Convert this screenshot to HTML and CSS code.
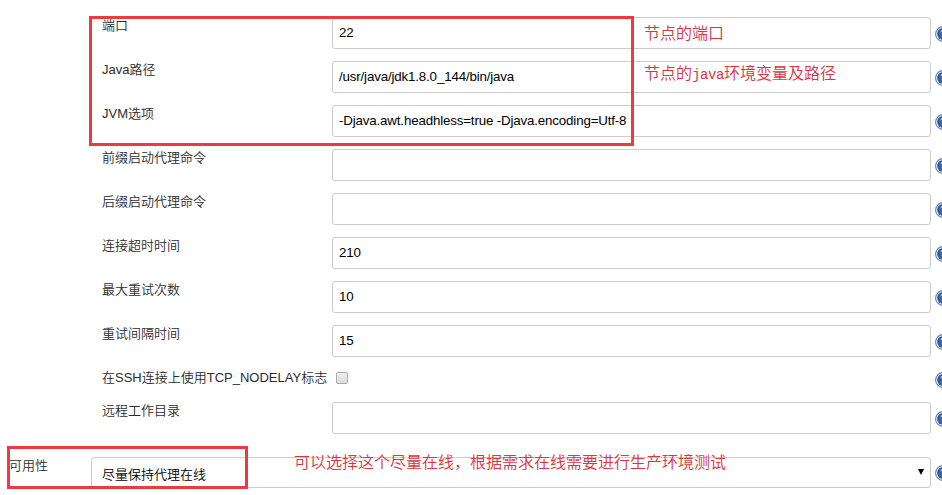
FILE: index.html
```html
<!DOCTYPE html>
<html lang="zh-CN">
<head>
<meta charset="utf-8">
<title>节点配置</title>
<link rel="stylesheet" href="styles.css">
</head>
<body>
<svg class="defs" width="0" height="0">
  <defs>
    <radialGradient id="ball" cx="50%" cy="60%" r="60%">
      <stop offset="0" stop-color="#4673ae"/>
      <stop offset="1" stop-color="#24508f"/>
    </radialGradient>
    <symbol id="help" viewBox="0 0 16 16">
      <circle cx="8" cy="8" r="7.4" fill="#fff" stroke="#5c7cab" stroke-width="1.1"/>
      <circle cx="8" cy="8" r="5.9" fill="url(#ball)"/>
      <path d="M6 6.2C6 3.6 10.8 3.6 10.8 6.2C10.8 8 8 7.8 8 9.7M8 11v1.5" fill="none" stroke="#a9bddb" stroke-width="1.4"/>
    </symbol>
  </defs>
</svg>
<form class="config">
  <div class="row"><label class="label">端口</label><div class="field">22</div><svg class="help"><use href="#help"/></svg></div>
  <div class="row"><label class="label">Java路径</label><div class="field">/usr/java/jdk1.8.0_144/bin/java</div><svg class="help"><use href="#help"/></svg></div>
  <div class="row"><label class="label">JVM选项</label><div class="field">-Djava.awt.headhless=true -Djava.encoding=Utf-8</div><svg class="help"><use href="#help"/></svg></div>
  <div class="row"><label class="label">前缀启动代理命令</label><div class="field"></div><svg class="help"><use href="#help"/></svg></div>
  <div class="row"><label class="label">后缀启动代理命令</label><div class="field"></div><svg class="help"><use href="#help"/></svg></div>
  <div class="row"><label class="label">连接超时时间</label><div class="field">210</div><svg class="help"><use href="#help"/></svg></div>
  <div class="row"><label class="label">最大重试次数</label><div class="field">10</div><svg class="help"><use href="#help"/></svg></div>
  <div class="row"><label class="label">重试间隔时间</label><div class="field">15</div><svg class="help"><use href="#help"/></svg></div>
  <div class="row row-check"><label class="label">在SSH连接上使用TCP_NODELAY标志</label><span class="check-cell"><span class="check"></span></span><svg class="help"><use href="#help"/></svg></div>
  <div class="row row-dir"><label class="label">远程工作目录</label><div class="field"></div><svg class="help"><use href="#help"/></svg></div>
  <div class="row row-avail"><label class="label">可用性</label><div class="field select"><span>尽量保持代理在线</span><svg class="arrow" viewBox="0 0 6 6"><path d="M0 0h6L3 6z"/></svg></div><svg class="help"><use href="#help"/></svg></div>
</form>
<div class="frame frame-top"></div>
<div class="frame frame-bottom"></div>
<p class="note note-port">节点的端口</p>
<p class="note note-java">节点的<span class="latin">java</span>环境变量及路径</p>
<p class="note note-avail">可以选择这个尽量在线，根据需求在线需要进行生产环境测试</p>
</body>
</html>
```
FILE: styles.css
```css
* { box-sizing: border-box; }
body {
  position: relative;
  width: 942px;
  height: 495px;
  margin: 0;
  overflow: hidden;
  background: #fff;
  color: #333;
  font: 350 13px/17px "Liberation Sans", "Noto Sans CJK SC", sans-serif;
}
.defs { position: absolute; }
.config { padding-top: 17px; }
.row {
  display: grid;
  grid-template-columns: 230px 599px 20px;
  align-items: start;
  height: 44px;
  padding-left: 102px;
}
.label { height: 17px; color: #2c2c2c; white-space: nowrap; }
.field {
  display: flex;
  align-items: center;
  height: 32px;
  padding: 0 6px 2px;
  border: 1px solid #ccc;
  border-radius: 3px;
  background: #fff;
  color: #000;
  font-size: 13.33px;
  letter-spacing: -0.16px;
  white-space: nowrap;
}
.help { display: block; width: 16px; height: 16px; margin: 9px 0 0 4px; }
.row-check { height: 33px; }
.check-cell { padding: 3px 0 0 4px; }
.check {
  display: block;
  width: 12px;
  height: 12px;
  border: 1px solid #aaa;
  border-radius: 2px;
  background: linear-gradient(#eee, #ddd);
}
.row-check .help { margin-top: 3px; }
.row-dir { height: 55px; }
.row-avail { grid-template-columns: 82px 840px 20px; padding-left: 9px; }
.select {
  justify-content: space-between;
  height: 31px;
  padding: 3px 6px 0 10px;
  font-size: 13px;
  letter-spacing: 0;
}
.row-avail .help { margin-top: 8px; }
.arrow { width: 6px; height: 6px; margin-bottom: 4px; }
.frame { position: absolute; border: 3px solid #eb3b40; }
.frame-top { left: 89px; top: 16px; width: 545px; height: 130px; }
.frame-bottom { left: 7px; top: 446px; width: 241px; height: 43px; }
.note {
  position: absolute;
  margin: 0;
  color: #d9353f;
  font: 350 16px/20px "Noto Sans CJK SC", sans-serif;
  white-space: nowrap;
}
.latin {
  display: inline-block;
  width: 32px;
  font: 400 14px/16px "Liberation Mono", monospace;
  letter-spacing: -0.4px;
}
.note-port { left: 644px; top: 22px; }
.note-java { left: 644px; top: 62px; }
.note-avail { left: 294px; top: 451px; }
```
